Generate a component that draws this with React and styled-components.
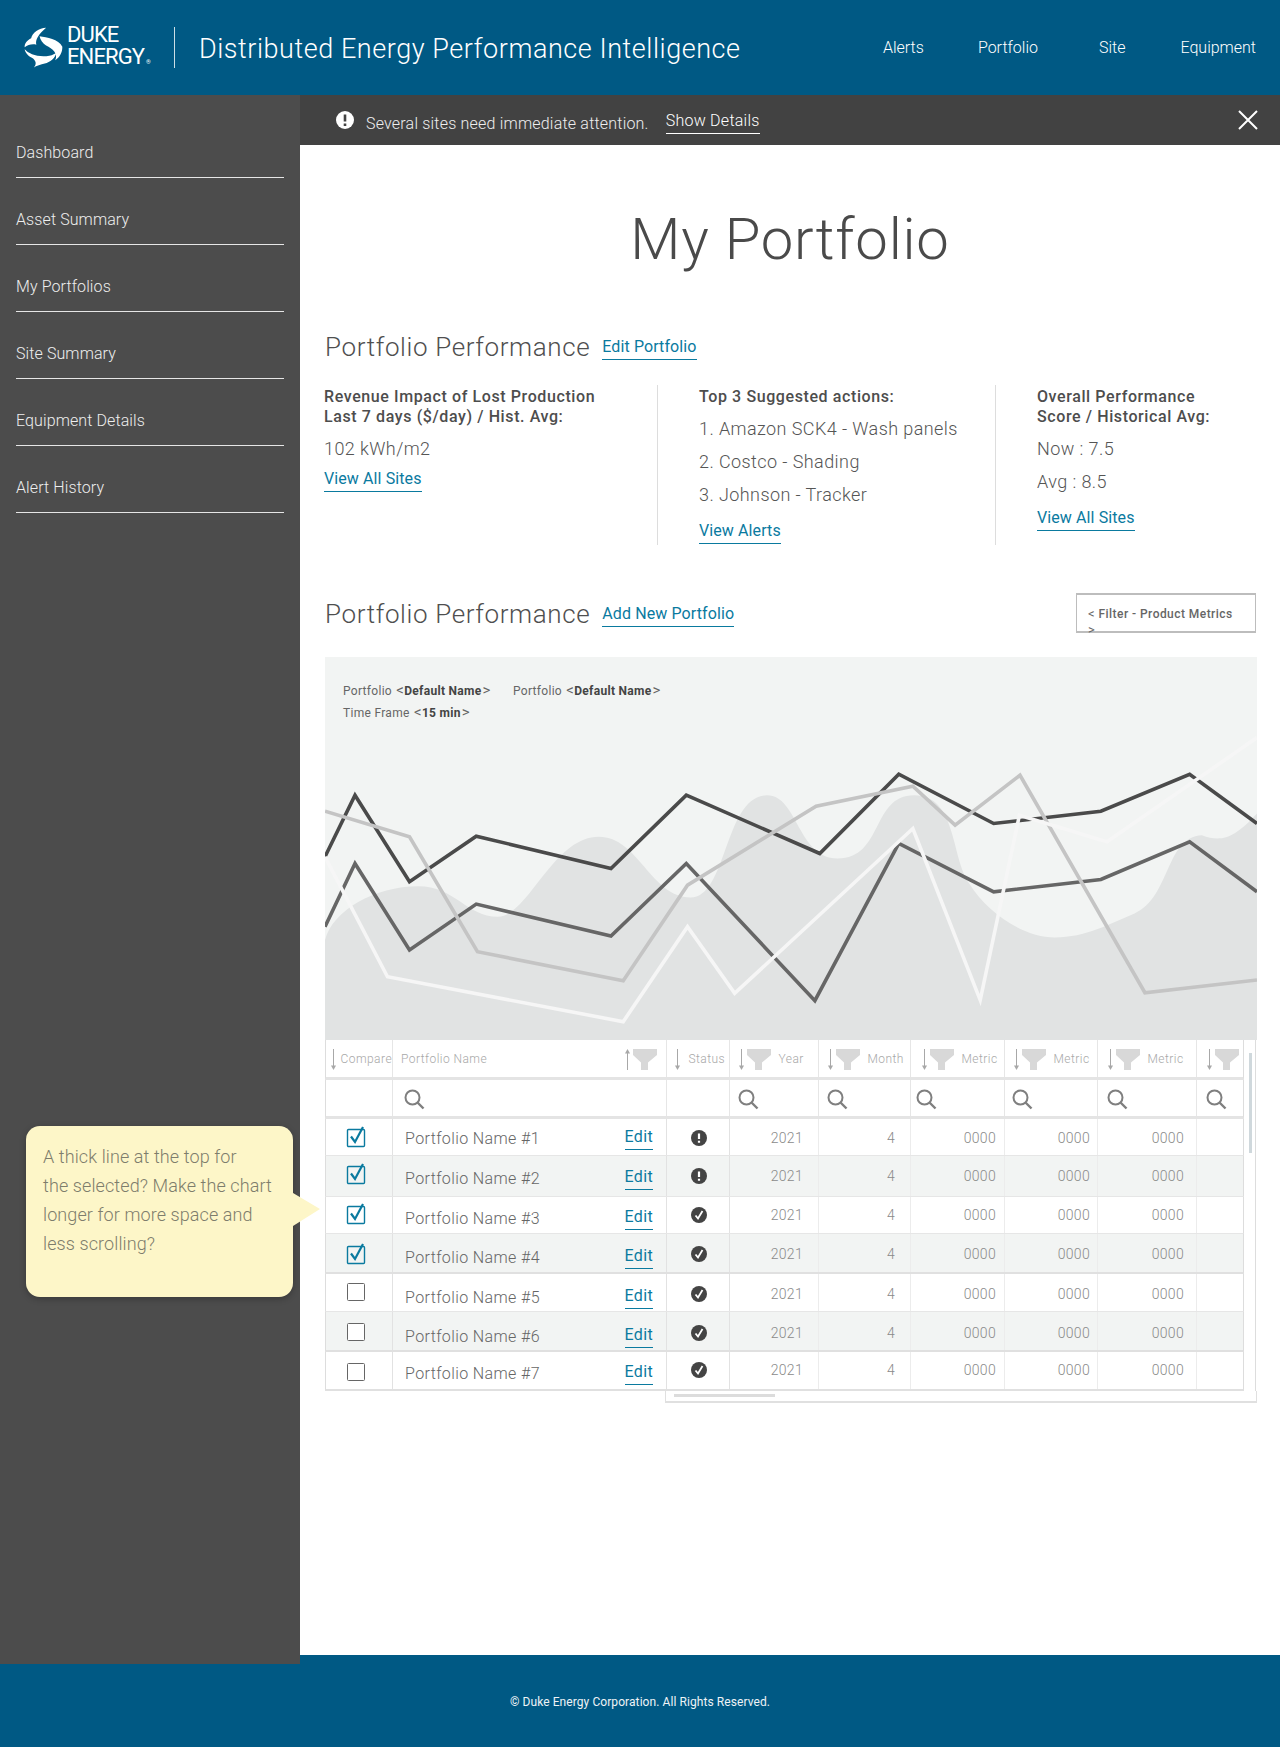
import React from "react";
import styled, { createGlobalStyle } from "styled-components";

const Global = createGlobalStyle`
  html, body { margin: 0; padding: 0; background: #fff; }
  body { font-family: "Roboto", "Liberation Sans", sans-serif; }
  * { box-sizing: border-box; }
`;

const COLS = "67px 274px 63px 89px 92px 94px 93px 99px 46px";
const TEAL = "#0a7a9f";

const Page = styled.div`width: 1280px; height: 1747px; overflow: hidden;`;
const Header = styled.header`
  height: 95px; background: #005984; color: #fff; display: flex; align-items: center;
  padding: 0 24px;
`;
const Brand = styled.div`display: flex; align-items: center; width: 150px; height: 41px;`;
const BrandText = styled.div`
  font-size: 22px; line-height: 22px; margin-left: 4px; font-weight: 400; margin-top: 2px;
  letter-spacing: -.9px; white-space: nowrap;
  & small { font-size: 6px; letter-spacing: 0; margin-left: 2px; }
`;
const HeaderRule = styled.div`width: 1px; height: 41px; background: #fff; opacity: .8;`;
const AppTitle = styled.div`font-size: 27px; font-weight: 300; letter-spacing: .55px; margin-left: 24px; white-space: nowrap; margin-top: 3px;`;
const Nav = styled.nav`margin-left: auto; display: flex; margin-top: 0;`;
const NavLink = styled.a`font-size: 16px; font-weight: 300; color: #fff; white-space: nowrap; letter-spacing: 0; margin-left: ${p => p.$gap}px;`;

const Body = styled.div`display: flex; align-items: flex-start; height: 1569px;`;
const Sidebar = styled.aside`
  position: relative; z-index: 1; width: 300px; height: 1569px; background: #4c4c4c; padding: 16px 16px 0;
`;
const SideItem = styled.a`
  display: block; height: 67px; line-height: 22px; padding-top: 31px; border-bottom: 1px solid #e6e6e6;
  color: #eee; font-size: 16px; font-weight: 300; letter-spacing: .1px;
`;
const Callout = styled.div`
  position: absolute; left: 26px; top: 1031px; width: 267px; height: 171px; background: #fdf6c8;
  border-radius: 14px; box-shadow: 0 2px 6px rgba(0,0,0,.25); padding: 16px 10px 0 17px;
  color: #7d7d6c; font-size: 18px; font-weight: 300; line-height: 29px; letter-spacing: .1px;
  &::after {
    content: ""; position: absolute; left: 100%; top: 67px; border-left: 27px solid #fdf6c8;
    border-top: 16px solid transparent; border-bottom: 17px solid transparent;
  }
`;

const Main = styled.main`flex: 1; height: 1560px; background: #fff;`;
const AlertBar = styled.div`height: 50px; background: #424242; color: #fff; display: flex; align-items: center; padding-left: 36px;`;
const AlertText = styled.span`font-size: 16px; font-weight: 300; letter-spacing: .2px; margin-left: 12px; margin-top: 7px; color: #eee;`;
const ShowDetails = styled.a`
  font-size: 16px; font-weight: 300; letter-spacing: .25px; margin-left: 17px; line-height: 20px; margin-top: 4px;
  border-bottom: 1.5px solid #fff; padding-bottom: 2px;
`;
const CloseBtn = styled.button`margin-left: auto; margin-right: 22px; background: none; border: 0; padding: 0; height: 20px; width: 20px; color: #fff; display: block;`;

const PageTitle = styled.h1`
  margin: 56px 0 0; text-align: center; font-size: 58px; line-height: 76px; font-weight: 300; color: #4a4a4a; letter-spacing: .8px;
`;
const SectionHead = styled.div`
  display: flex; align-items: center; padding: 0 24px 0 24px; margin-top: ${p => p.$top}px; height: ${p => p.$h}px;
`;
const SectionTitle = styled.h2`margin: 1px 0 0 1px; font-size: 26px; line-height: 30px; font-weight: 300; color: #4f4f4f; letter-spacing: .62px; white-space: nowrap;`;
const TextLink = styled.a`
  display: inline-block; color: ${TEAL}; font-size: 16px; line-height: 20px; letter-spacing: .1px; padding-bottom: 2px;
  border-bottom: 1.5px solid ${TEAL}; white-space: nowrap; margin-top: ${p => p.$top || 0}px; font-weight: 400;
`;
const HeadLink = styled(TextLink)`margin-left: 12px; margin-top: 5px;`;
const FilterBox = styled.div`
  margin-left: auto; width: 180px; height: 40px; border: 1px solid #bdbdbd; border-top-width: 2px; border-bottom-width: 2px;
  padding: 11px 8px 0 11px; font-size: 12px; line-height: 16px; font-weight: 500; color: #666; letter-spacing: .45px; white-space: nowrap;
  & span { font-weight: 400; font-size: 13px; }
`;

const Stats = styled.div`display: grid; grid-template-columns: 334px 338px 1fr; margin: 24px 0 0 24px; height: 160px;`;
const StatCol = styled.div`
  padding-left: ${p => p.$pad}px; padding-top: 2px; border-right: ${p => p.$rule ? "1px solid #ddd" : "0"};
`;
const StatTitle = styled.div`font-size: 16px; line-height: 20px; font-weight: 500; color: #4d4d4d; letter-spacing: .6px; margin-bottom: 5px; white-space: nowrap;`;
const StatLine = styled.div`font-size: 18px; line-height: 33px; font-weight: 300; color: #555; letter-spacing: .42px; white-space: nowrap;`;

const Chart = styled.div`position: relative; margin-left: 25px; margin-top: 24px; width: 932px; height: 383px; background: #f2f4f3; padding: 22px 0 0 18px;`;
const ChartSvg = styled.svg`position: absolute; inset: 0; width: 100%; height: 100%; display: block;`;
const LabelRow = styled.div`position: relative; display: flex; height: 22px; align-items: center; font-size: 12px; color: #666; letter-spacing: .3px; white-space: nowrap;`;
const ChartLabel = styled.span`
  width: ${p => p.$w}px;
  & b { color: #444; font-weight: 700; }
  & i { font-style: normal; font-size: 15px; margin-left: 1px; }
`;

const TableWrap = styled.div`position: relative; margin-left: 25px; width: 931px; border-right: 1px solid #ddd; background: #fff; height: 351px;`;
const Grid = styled.div`display: grid; grid-template-columns: ${COLS}; height: ${p => p.$h}px; width: 919px; border-left: 1px solid #ddd; border-right: 1px solid #ddd;
  background: ${p => p.$alt ? "#f2f4f3" : "#fff"}; border-bottom: ${p => p.$b || 1}px solid ${p => p.$c || "#e6e6e6"};`;
const HeadCell = styled.div`
  display: flex; align-items: flex-start; gap: 2px; padding: 9px 0 0 ${p => p.$pad}px; border-right: ${p => p.$last ? "0" : "1px solid #e6e6e6"}; min-width: 0;
`;
const HeadLabel = styled.span`
  font-size: 12px; font-weight: 300; color: #a8a8a8; letter-spacing: .45px; line-height: 21px; margin-left: ${p => p.$ml}px; white-space: nowrap; margin-right: ${p => p.$auto ? "auto" : 0};
`;
const SearchCell = styled.div`padding: 9px 0 0 ${p => p.$pad}px; border-right: ${p => p.$last ? "0" : "1px solid #e6e6e6"};`;
const Cell = styled.div`border-right: ${p => p.$last ? "0" : `1px solid ${p.$dark ? "#e2e2e2" : "#ececec"}`}; min-width: 0;`;
const CheckCell = styled(Cell)`padding: ${p => p.$top}px 0 0 21px;`;
const StatusCell = styled(Cell)`display: flex; justify-content: center; align-items: flex-start; padding: ${p => p.$top}px 0 0 1px;`;
const NameCell = styled(Cell)`display: flex; justify-content: space-between; align-items: flex-start; padding: 0 13px 0 12px;`;
const Name = styled.span`font-size: 16px; line-height: 20px; margin-top: ${p => p.$top}px; color: #666; font-weight: 300; letter-spacing: .38px; white-space: nowrap;`;
const EditLink = styled(TextLink)`font-size: 16px; letter-spacing: .35px; padding-bottom: 2px; font-weight: 400;`;
const NumCell = styled(Cell)`text-align: right; padding: ${p => p.$top}px ${p => p.$right}px 0 0; font-size: 14px; font-weight: 300; line-height: 16px; color: #8a8a8a; letter-spacing: .3px;`;
const VScroll = styled.div`position: absolute; right: 3px; top: 13px; width: 3px; height: 100px; background: #cfd8dc;`;
const HScroll = styled.div`position: absolute; left: 340px; top: 351px; width: 592px; height: 12px; background: #fff; border: 1px solid #e0e0e0; border-top: 0; border-bottom-width: 2px; padding: 3px 0 0 8px;`;
const HThumb = styled.div`width: 101px; height: 3px; background: #dcdcdc;`;

const Footer = styled.footer`
  height: 92px; margin-top: -9px; padding-top: 1px; background: #005984; color: #eef3f6; display: flex; justify-content: center; align-items: center;
  font-size: 12px; font-weight: 400; letter-spacing: .08px;
`;

const Logo = () => (
  <svg width="39" height="41" viewBox="40 38 120 125" fill="#fff" style={{ flex: "none" }}>
    <path d="M108 40C86 40 66 56 62 72C50 78 41 88 42 100C52 92 66 88 78 92C74 78 84 60 108 40Z" />
    <path d="M88 66C110 70 146 74 158 98C158 116 150 130 136 140C146 118 128 104 108 94C98 88 90 78 88 66Z" />
    <path d="M42 106C54 120 84 132 118 126C128 124 136 120 140 116C136 134 120 146 104 150C92 152 78 158 70 162C80 150 76 142 68 134C54 128 44 118 42 106Z" />
  </svg>
);

const Arrow = ({ up }) => (
  <svg width="7" height="21" viewBox="0 0 7 21" style={{ flex: "none" }}>
    <path d={up ? "M3.5 4V21" : "M3.5 0V17"} stroke="#a8a8a8" strokeWidth="1" />
    <path d={up ? "M1 4.5L3.5 0L6 4.5Z" : "M1 16.5L3.5 21L6 16.5Z"} fill="#a8a8a8" />
  </svg>
);
const Funnel = () => (
  <svg width="24" height="21" viewBox="0 0 24 21" style={{ flex: "none" }}>
    <path d="M0 0H24V6L15 13.5V21H8V13.5L0 6Z" fill="#d8d8d8" />
  </svg>
);
const Search = () => (
  <svg width="21" height="21" viewBox="0 0 21 21" style={{ display: "block" }}>
    <circle cx="8.5" cy="8.5" r="7" fill="none" stroke="#7f7f7f" strokeWidth="2" />
    <path d="M13.5 13.5L19.5 19.5" stroke="#7f7f7f" strokeWidth="2.4" />
  </svg>
);
const Check = ({ on }) => (
  <svg width="18" height="18" viewBox="0 0 18 18" style={{ display: "block", overflow: "visible" }}>
    <rect x=".5" y=".5" width="17" height="17" rx="1" fill={on ? "none" : "#fff"} stroke={on ? TEAL : "#666"} strokeWidth={on ? 1.4 : 1} />
    {on && <path d="M4 7.5L8 13L16 -2" fill="none" stroke={TEAL} strokeWidth="2.2" />}
  </svg>
);
const Status = ({ ok }) => (
  <svg width="16" height="16" viewBox="0 0 16 16" style={{ display: "block" }}>
    <circle cx="8" cy="8" r="8" fill="#444" />
    {ok ? <path d="M4.5 8.5L7 11.5L11.5 4" fill="none" stroke="#fff" strokeWidth="1.8" />
      : <path d="M8 3.5V9M8 10.8V12.8" fill="none" stroke="#fff" strokeWidth="2.2" />}
  </svg>
);

const P = (a) => a.map(([x, y]) => `${x},${y}`).join(" ");
const lines = [
  { c: "#4a4a4a", p: [[8,620],[57,435],[146,695],[255,558],[475,655],[598,435],[816,610],[945,372],[1100,520],[1275,483],[1420,372],[1530,520]] },
  { c: "#666666", p: [[8,830],[57,640],[146,900],[255,762],[475,858],[598,640],[808,1052],[945,580],[1100,725],[1275,688],[1420,575],[1530,725]] },
  { c: "#c4c4c4", p: [[8,483],[146,560],[257,905],[495,992],[600,705],[810,468],[968,408],[1037,525],[1143,375],[1347,1028],[1530,990]] },
  { c: "#f6f6f6", p: [[8,620],[110,980],[495,1115],[600,830],[677,1030],[968,535],[1078,1050],[1142,495],[1285,575],[1530,262]] },
];

const headers = [
  { label: "Status", pad: 6.5, ml: 6 },
  { label: "Year", pad: 7.5, ml: 6, funnel: true },
  { label: "Month", pad: 7.5, ml: 6, funnel: true },
  { label: "Metric", pad: 9.5, ml: 6, funnel: true },
  { label: "Metric", pad: 7.5, ml: 6, funnel: true },
  { label: "Metric", pad: 8.5, ml: 6, funnel: true },
  { label: "", pad: 8.5, ml: 0, funnel: true, last: true },
];

const rows = [
  { n: 1, y: 1119, h: 37, name: 1139, u: 1149, chk: 1129, st: 1138, on: true, ok: false },
  { n: 2, y: 1156, h: 41, name: 1179, u: 1189, chk: 1166, st: 1176, on: true, ok: false },
  { n: 3, y: 1197, h: 37, name: 1219, u: 1229, chk: 1206, st: 1215, on: true, ok: true },
  { n: 4, y: 1234, h: 40, name: 1258, u: 1268, chk: 1246, st: 1254, on: true, ok: true, b: 2, c: "#e0e0e0" },
  { n: 5, y: 1274, h: 38, name: 1298, u: 1308, chk: 1283, st: 1294, on: false, ok: true },
  { n: 6, y: 1312, h: 40, name: 1337, u: 1347, chk: 1323, st: 1333, on: false, ok: true, b: 2, c: "#e0e0e0" },
  { n: 7, y: 1352, h: 39, name: 1374, u: 1384, chk: 1363, st: 1370, on: false, ok: true, b: 2, c: "#e0e0e0" },
];

const nums = [
  { v: "2021", r: 15 },
  { v: "4", r: 15 },
  { v: "0000", r: 8 },
  { v: "0000", r: 7 },
  { v: "0000", r: 12 },
];
const searchPads = [8, 8, 5, 7, 9, 9];

export default function App() {
  return (
    <Page>
      <Global />
      <Header>
        <Brand>
          <Logo />
          <BrandText>DUKE<br />ENERGY<small>®</small></BrandText>
        </Brand>
        <HeaderRule />
        <AppTitle>Distributed Energy Performance Intelligence</AppTitle>
        <Nav>
          <NavLink $gap={0}>Alerts</NavLink>
          <NavLink $gap={54}>Portfolio</NavLink>
          <NavLink $gap={61}>Site</NavLink>
          <NavLink $gap={55}>Equipment</NavLink>
        </Nav>
      </Header>
      <Body>
        <Sidebar>
          {["Dashboard", "Asset Summary", "My Portfolios", "Site Summary", "Equipment Details", "Alert History"].map(t => (
            <SideItem key={t}>{t}</SideItem>
          ))}
          <Callout>A thick line at the top for<br />the selected? Make the chart<br />longer for more space and<br />less scrolling?</Callout>
        </Sidebar>
        <Main>
          <AlertBar>
            <svg width="18" height="18" viewBox="0 0 18 18" style={{ flex: "none", marginTop: -1 }}>
              <circle cx="9" cy="9" r="9" fill="#fff" />
              <path d="M9 3.5V10.5M9 12.5V15" stroke="#424242" strokeWidth="2.6" fill="none" />
            </svg>
            <AlertText>Several sites need immediate attention.</AlertText>
            <ShowDetails>Show Details</ShowDetails>
            <CloseBtn aria-label="Close">
              <svg width="20" height="20" viewBox="0 0 20 20" style={{ display: "block" }}>
                <path d="M1 1L19 19M19 1L1 19" stroke="#fff" strokeWidth="2" />
              </svg>
            </CloseBtn>
          </AlertBar>
          <PageTitle>My Portfolio</PageTitle>
          <SectionHead $top={54} $h={30}>
            <SectionTitle>Portfolio Performance</SectionTitle>
            <HeadLink>Edit Portfolio</HeadLink>
          </SectionHead>
          <Stats>
            <StatCol $rule>
              <StatTitle>Revenue Impact of Lost Production<br />Last 7 days ($/day) / Hist. Avg:</StatTitle>
              <StatLine>102 kWh/m2</StatLine>
              <TextLink $top={4}>View All Sites</TextLink>
            </StatCol>
            <StatCol $rule $pad={41}>
              <StatTitle>Top 3 Suggested actions:</StatTitle>
              <StatLine>1. Amazon SCK4 - Wash panels</StatLine>
              <StatLine>2. Costco - Shading</StatLine>
              <StatLine>3. Johnson - Tracker</StatLine>
              <TextLink $top={10}>View Alerts</TextLink>
            </StatCol>
            <StatCol $pad={41}>
              <StatTitle>Overall Performance<br />Score / Historical Avg:</StatTitle>
              <StatLine>Now : 7.5</StatLine>
              <StatLine>Avg : 8.5</StatLine>
              <TextLink $top={10}>View All Sites</TextLink>
            </StatCol>
          </Stats>
          <SectionHead $top={48} $h={40}>
            <SectionTitle>Portfolio Performance</SectionTitle>
            <HeadLink>Add New Portfolio</HeadLink>
            <FilterBox><span>&lt;</span> Filter - Product Metrics<br /><span>&gt;</span></FilterBox>
          </SectionHead>
          <Chart>
            <ChartSvg viewBox="8 20 1522 1150" preserveAspectRatio="none">
              <path fill="#e1e3e3" d="M8,870 C20,780 90,708 160,708 C220,708 240,800 290,800 C340,800 380,560 455,560 C520,560 540,742 605,742 C665,742 660,435 730,435 C780,435 780,625 845,625 C920,625 900,435 970,435 C1040,435 1030,620 1060,700 C1090,790 1150,862 1200,862 C1250,862 1290,820 1330,790 C1390,740 1380,560 1440,555 C1470,575 1490,570 1530,490 L1530,1170 L8,1170 Z" />
              {lines.map(l => (
                <polyline key={l.c} points={P(l.p)} fill="none" stroke={l.c} strokeWidth="3.6" vectorEffect="non-scaling-stroke" />
              ))}
            </ChartSvg>
            <LabelRow>
              <ChartLabel $w={170}>Portfolio <i>&lt;</i><b>Default Name</b><i>&gt;</i></ChartLabel>
              <ChartLabel $w={170}>Portfolio <i>&lt;</i><b>Default Name</b><i>&gt;</i></ChartLabel>
            </LabelRow>
            <LabelRow>
              <ChartLabel $w={170}>Time Frame <i>&lt;</i><b>15 min</b><i>&gt;</i></ChartLabel>
            </LabelRow>
          </Chart>
          <TableWrap>
            <Grid $h={40} $b={3} $c="#e4e4e4">
              <HeadCell $pad={3.5}><Arrow /><HeadLabel $ml={2}>Compare</HeadLabel></HeadCell>
              <HeadCell $pad={8}>
                <HeadLabel $ml={0} $auto>Portfolio Name</HeadLabel>
                <Arrow up /><Funnel />
                <span style={{ width: 7 }} />
              </HeadCell>
              {headers.map((h, i) => (
                <HeadCell key={i} $pad={h.pad} $last={h.last}>
                  <Arrow />
                  {h.funnel && <Funnel />}
                  {h.label && <HeadLabel $ml={h.ml}>{h.label}</HeadLabel>}
                </HeadCell>
              ))}
            </Grid>
            <Grid $h={39} $b={3} $c="#e4e4e4">
              <SearchCell />
              <SearchCell $pad={11}><Search /></SearchCell>
              <SearchCell />
              {searchPads.map((p, i) => (
                <SearchCell key={i} $pad={p} $last={i === searchPads.length - 1}><Search /></SearchCell>
              ))}
            </Grid>
            {rows.map(r => (
              <Grid key={r.n} $h={r.h} $alt={r.n % 2 === 0} $b={r.b} $c={r.c}>
                <CheckCell $dark $top={r.chk - r.y}><Check on={r.on} /></CheckCell>
                <NameCell $dark>
                  <Name $top={r.name - r.y - 10}>Portfolio Name #{r.n}</Name>
                  <EditLink $top={r.u - r.y - 22}>Edit</EditLink>
                </NameCell>
                <StatusCell $dark $top={r.st - r.y - 8}><Status ok={r.ok} /></StatusCell>
                {nums.map((c, i) => (
                  <NumCell key={i} $right={c.r} $top={r.st - r.y - 8}>{c.v}</NumCell>
                ))}
                <Cell $last />
              </Grid>
            ))}
            <VScroll />
            <HScroll><HThumb /></HScroll>
          </TableWrap>
        </Main>
      </Body>
      <Footer>© Duke Energy Corporation. All Rights Reserved.</Footer>
    </Page>
  );
}
